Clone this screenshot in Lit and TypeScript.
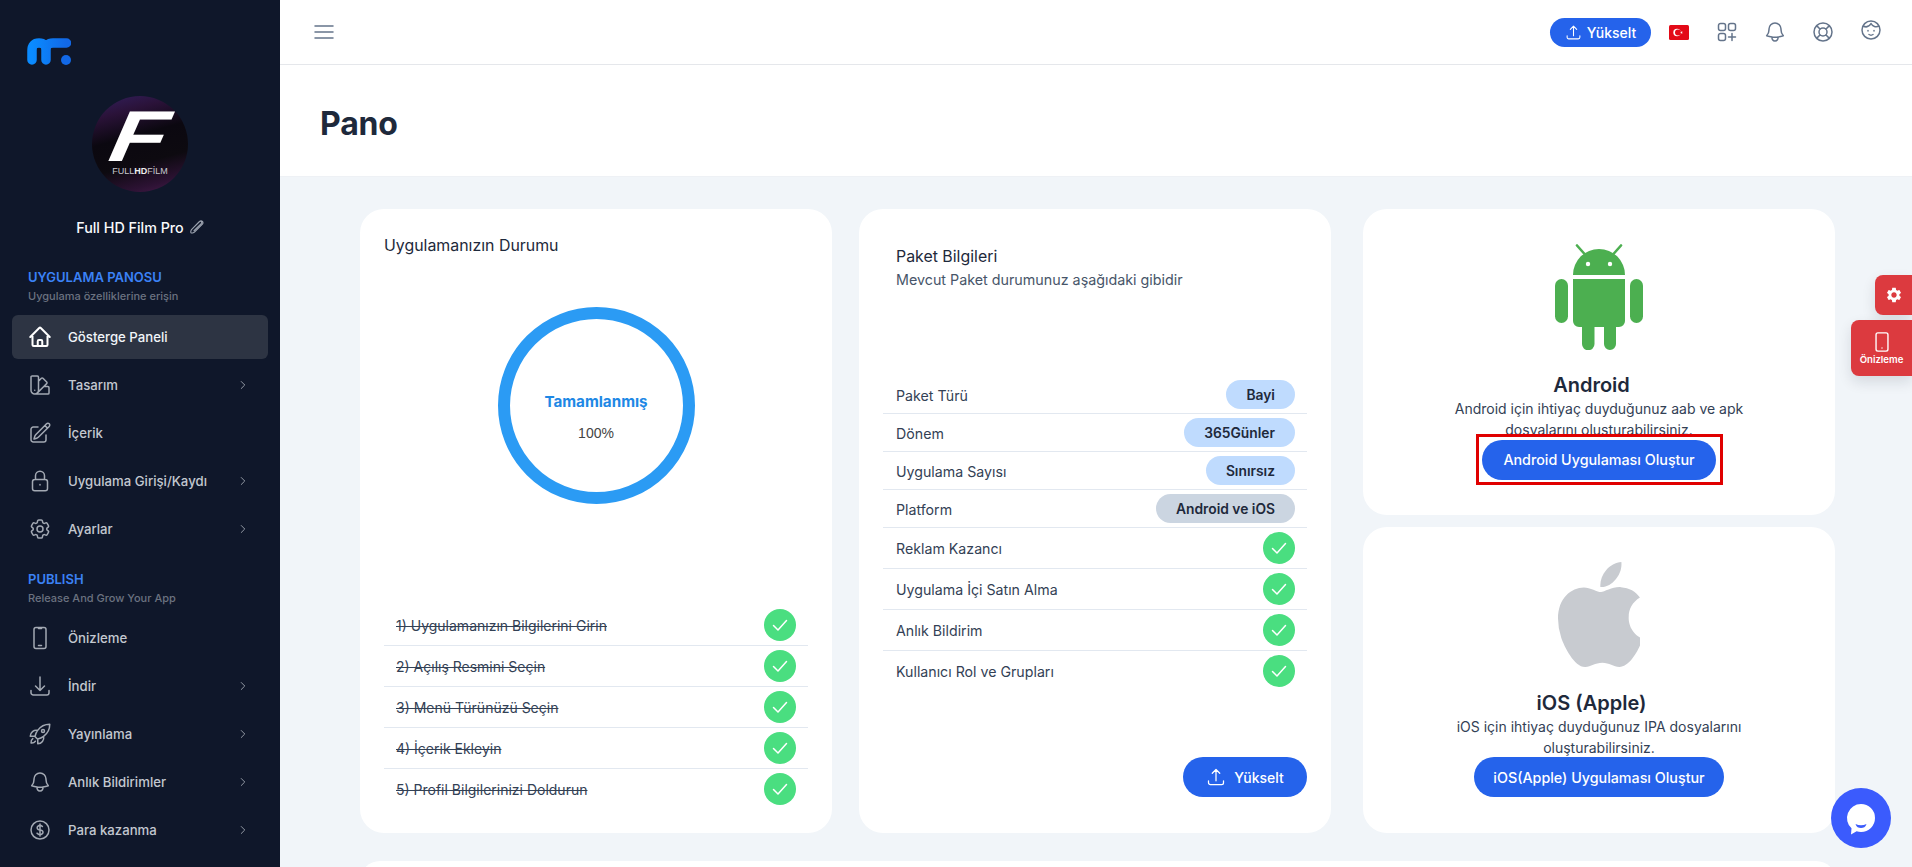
import { LitElement, html, css } from "lit";
import { customElement } from "lit/decorators.js";

const P = {
  home: "M2.25 12l8.954-8.955c.44-.439 1.152-.439 1.591 0L21.75 12M4.5 9.75v10.125c0 .621.504 1.125 1.125 1.125H9.75v-4.875c0-.621.504-1.125 1.125-1.125h2.25c.621 0 1.125.504 1.125 1.125V21h4.125c.621 0 1.125-.504 1.125-1.125V9.75M8.25 21h8.25",
  swatch: "M4.098 19.902a3.75 3.75 0 005.304 0l6.401-6.402M6.75 21A3.75 3.75 0 013 17.25V4.125C3 3.504 3.504 3 4.125 3h5.25c.621 0 1.125.504 1.125 1.125v4.072M6.75 21a3.75 3.75 0 003.75-3.75V8.197M6.75 21h13.125c.621 0 1.125-.504 1.125-1.125v-5.25c0-.621-.504-1.125-1.125-1.125h-4.072M10.5 8.197l2.88-2.88c.438-.439 1.15-.439 1.59 0l3.712 3.713c.44.44.44 1.152 0 1.59l-2.879 2.88M6.75 17.25h.008v.008H6.75v-.008z",
  edit: "M16.862 4.487l1.687-1.688a1.875 1.875 0 112.652 2.652L10.582 16.07a4.5 4.5 0 01-1.897 1.13L6 18l.8-2.685a4.5 4.5 0 011.13-1.897l8.932-8.931zm0 0L19.5 7.125M18 14v4.75A2.25 2.25 0 0115.75 21H5.25A2.25 2.25 0 013 18.75V8.25A2.25 2.25 0 015.25 6H10",
  lock: "M16.5 10.5V6.75a4.5 4.5 0 10-9 0v3.75m-.75 11.25h10.5a2.25 2.25 0 002.25-2.25v-6.75a2.25 2.25 0 00-2.25-2.25H6.75a2.25 2.25 0 00-2.25 2.25v6.75a2.25 2.25 0 002.25 2.25zM12 15.5v.5",
  gear: "M9.594 3.94c.09-.542.56-.94 1.11-.94h2.593c.55 0 1.02.398 1.11.94l.213 1.281c.063.374.313.686.645.87.074.04.147.083.22.127.324.196.72.257 1.075.124l1.217-.456a1.125 1.125 0 011.37.49l1.296 2.247a1.125 1.125 0 01-.26 1.431l-1.003.827c-.293.24-.438.613-.431.992a6.759 6.759 0 010 .255c-.007.378.138.75.43.99l1.005.828c.424.35.534.954.26 1.43l-1.298 2.247a1.125 1.125 0 01-1.369.491l-1.217-.456c-.355-.133-.75-.072-1.076.124a6.57 6.57 0 01-.22.128c-.331.183-.581.495-.644.869l-.213 1.28c-.09.543-.56.941-1.11.941h-2.594c-.55 0-1.02-.398-1.11-.94l-.213-1.281c-.062-.374-.312-.686-.644-.87a6.52 6.52 0 01-.22-.127c-.325-.196-.72-.257-1.076-.124l-1.217.456a1.125 1.125 0 01-1.369-.49l-1.297-2.247a1.125 1.125 0 01.26-1.431l1.004-.827c.292-.24.437-.613.43-.992a6.932 6.932 0 010-.255c.007-.378-.138-.75-.43-.99l-1.004-.828a1.125 1.125 0 01-.26-1.43l1.297-2.247a1.125 1.125 0 011.37-.491l1.216.456c.356.133.751.072 1.076-.124.072-.044.146-.087.22-.128.332-.183.582-.495.644-.869l.214-1.281zM15 12a3 3 0 11-6 0 3 3 0 016 0z",
  phone: "M8 1.500h8a2 2 0 012 2v17a2 2 0 01-2 2H8a2 2 0 01-2-2v-17a2 2 0 012-2zM10.500 1.500v1h3v-1M10.500 19.500h3",
  tablet: "M7.500 2h9a2 2 0 012 2v16a2 2 0 01-2 2h-9a2 2 0 01-2-2V4a2 2 0 012-2zM12 18.500v.1",
  download: "M3 16.5v2.25A2.25 2.25 0 005.25 21h13.5A2.25 2.25 0 0021 18.75V16.5M16.5 12L12 16.5m0 0L7.5 12m4.5 4.5V3",
  rocket: "M15.59 14.37a6 6 0 01-5.84 7.38v-4.8m5.84-2.58a14.98 14.98 0 006.16-12.12A14.98 14.98 0 009.631 8.41m5.96 5.96a14.926 14.926 0 01-5.841 2.58m-.119-8.54a6 6 0 00-7.381 5.84h4.8m2.581-5.84a14.927 14.927 0 00-2.58 5.84m2.699 2.7c-.103.021-.207.041-.311.06a15.09 15.09 0 01-2.448-2.448 14.9 14.9 0 01.06-.312m-2.24 2.39a4.493 4.493 0 00-1.757 4.306 4.493 4.493 0 004.306-1.758M16.5 9a1.5 1.5 0 11-3 0 1.5 1.5 0 013 0z",
  bell: "M14.857 17.082a23.848 23.848 0 005.454-1.31A8.967 8.967 0 0118 9.75v-.7V9A6 6 0 006 9v.75a8.967 8.967 0 01-2.312 6.022c1.733.64 3.56 1.085 5.455 1.31m5.714 0a24.255 24.255 0 01-5.714 0m5.714 0a3 3 0 11-5.714 0",
  dollar: "M12 6v12m-3-2.818l.879.659c1.171.879 3.07.879 4.242 0 1.172-.879 1.172-2.303 0-3.182C13.536 12.219 12.768 12 12 12c-.725 0-1.45-.22-2.003-.659-1.106-.879-1.106-2.303 0-3.182s2.9-.879 4.006 0l.415.33M21 12a9 9 0 11-18 0 9 9 0 0118 0z",
  chevron: "M9 6l6 6-6 6",
  upload: "M3 16.5v2.25A2.25 2.25 0 005.25 21h13.5A2.25 2.25 0 0021 18.75V16.5m-13.5-9L12 3m0 0l4.5 4.5M12 3v13.5",
  menu: "M3 6h18M3 12h18M3 18h18",
  apps: "M5.500 3.500h3a2 2 0 012 2v3a2 2 0 01-2 2h-3a2 2 0 01-2-2v-3a2 2 0 012-2zM15.500 3.500h3a2 2 0 012 2v3a2 2 0 01-2 2h-3a2 2 0 01-2-2v-3a2 2 0 012-2zM5.500 13.500h3a2 2 0 012 2v3a2 2 0 01-2 2h-3a2 2 0 01-2-2v-3a2 2 0 012-2zM17 13.500v7M13.500 17h7",
  buoy: "M21 12a9 9 0 11-18 0 9 9 0 0118 0zM16 12a4 4 0 11-8 0 4 4 0 018 0zM5.600 5.600l3.600 3.600M18.400 5.600l-3.600 3.600M5.600 18.400l3.600-3.600M18.400 18.400l-3.600-3.600",
  face: "M21 12a9 9 0 11-18 0 9 9 0 0118 0zM4 8c3 1.500 6 1 8-2.500 1.500 3 5 4 8 2.500M9 12.500v.5M15 12.500v.5M10 16.500c1.200.8 2.800.8 4 0",
  pencil: "M15.500 4.500a2.600 2.600 0 013.700 3.700L9 18.400c-1.600 1.600-4.300 2-5 1.300s-.3-3.400 1.300-5L15 5c1-1 2.300-.7 2.800-.2s.8 1.800-.2 2.800L8 17",
  check: "M5.500 12.500l4.500 4.500 8.500-9.500",
};

const ICO = (d: string, cls = "") => html`<svg class=${cls} viewBox="0 0 24 24" fill="none" stroke="currentColor" stroke-width="1.5" stroke-linecap="round" stroke-linejoin="round"><path d=${d}></path></svg>`;

const NAV1 = [
  { t: "Gösterge Paneli", i: P.home, active: true },
  { t: "Tasarım", i: P.swatch, more: true },
  { t: "İçerik", i: P.edit },
  { t: "Uygulama Girişi/Kaydı", i: P.lock, more: true },
  { t: "Ayarlar", i: P.gear, more: true },
];
const NAV2 = [
  { t: "Önizleme", i: P.phone },
  { t: "İndir", i: P.download, more: true },
  { t: "Yayınlama", i: P.rocket, more: true },
  { t: "Anlık Bildirimler", i: P.bell, more: true },
  { t: "Para kazanma", i: P.dollar, more: true },
];
const STEPS = [
  "1) Uygulamanızın Bilgilerini Girin",
  "2) Açılış Resmini Seçin",
  "3) Menü Türünüzü Seçin",
  "4) İçerik Ekleyin",
  "5) Profil Bilgilerinizi Doldurun",
];
const PILLS = [
  { l: "Paket Türü", v: "Bayi", gray: false },
  { l: "Dönem", v: "365Günler", gray: false },
  { l: "Uygulama Sayısı", v: "Sınırsız", gray: false },
  { l: "Platform", v: "Android ve iOS", gray: true },
];
const FEATS = ["Reklam Kazancı", "Uygulama İçi Satın Alma", "Anlık Bildirim", "Kullanıcı Rol ve Grupları"];

@customElement("app-root")
export class AppRoot extends LitElement {
  static styles = css`
    :host { display: block; width: 100%; height: 100vh; overflow: hidden; font-family: Inter, "Noto Sans", sans-serif; color: #1e293b; position: relative; }
    * { box-sizing: border-box; }
    svg { display: block; flex: none; }
    .app { display: flex; height: 867px; overflow: hidden; }

    .side { width: 280px; flex: none; background: #0f172a; color: #c3c8d0; padding-top: 38px; overflow: hidden; }
    .logo { display: block; margin-left: 27px; width: 44px; height: 27px; }
    .avatar { width: 96px; height: 96px; border-radius: 50%; margin: 31px auto 0; overflow: hidden; display: flex; flex-direction: column; align-items: center; color: #fff;
      background: linear-gradient(165deg, #33205f 0%, #2a1238 20%, #0b0810 42%, #0d0a10 66%, #2c1233 86%, #4a1d4e 100%); }
    .bigf { font-size: 72px; line-height: 56px; height: 56px; font-weight: 700; font-style: italic; margin-top: 12px; font-family: "Liberation Sans", sans-serif; transform: scaleX(1.3) skewX(-8deg); }
    .brand { font-size: 9px; line-height: 11px; color: #c9c9cf; margin-top: 2px; font-family: "Liberation Sans", sans-serif; }
    .brand b { color: #eee; }
    .name { display: flex; justify-content: center; align-items: center; gap: 4px; margin-top: 23px; height: 24px; font-size: 14.3px; font-weight: 500; color: #f8fafc; padding-left: 2px; }
    .name svg { width: 18px; height: 18px; color: #9ca3af; }
    .sec { margin: 30px 0 0 28px; font-size: 13px; line-height: 16px; font-weight: 600; color: #3b82f6; }
    .sec.two { margin-top: 20px; }
    .sub { margin: 3px 0 11px 28px; font-size: 11px; line-height: 16px; font-weight: 500; color: #6b7280; }
    .sub.two { margin-bottom: 10px; }
    .nav { display: flex; flex-direction: column; gap: 4px; padding: 0 12px; }
    .item { display: flex; align-items: center; gap: 16px; height: 44px; padding: 0 18px 0 16px; border-radius: 6px; font-size: 13.2px; font-weight: 500; }
    .item > svg:first-child { width: 24px; height: 24px; color: #a3a9b3; }
    .item.on { background: #2d3443; color: #f1f5f9; }
    .item.on > svg:first-child { color: #fff; stroke-width: 2; }
    .chev { width: 14px; height: 14px; margin-left: auto; color: #a3a9b3; }

    .main { flex: 1; min-width: 0; background: #f1f5f9; display: flex; flex-direction: column; }
    .top { height: 65px; flex: none; background: #fff; border-bottom: 1px solid #e5e7eb; display: flex; align-items: center; padding: 0 29px 0 32px; }
    .top .burger { width: 24px; height: 24px; color: #64748b; }
    .upbtn { display: flex; align-items: center; justify-content: center; background: #2563eb; color: #fff; border: 0; border-radius: 999px; font: inherit; font-weight: 500; font-size: 14px; }
    .top .upbtn { margin-left: auto; width: 101px; height: 29px; gap: 5px; }
    .top .upbtn svg { width: 17px; height: 17px; }
    .flag { margin-left: 18px; width: 20px; height: 15px; }
    .ti { width: 24px; height: 24px; color: #64748b; }
    .ti.a { margin-left: 26px; }
    .ti.b { margin-left: 24px; }
    .ti.c { margin-left: 24px; }
    .ti.d { margin: -4px 0 0 24px; }
    .band { height: 112px; flex: none; background: #fff; border-bottom: 1px solid #eef1f5; display: flex; align-items: center; padding: 0 0 0 40px; }
    .band h1 { margin: 7px 0 0; font-size: 32px; line-height: 36px; font-weight: 700; color: #1e293b; letter-spacing: -.2px; }

    .content { padding: 32px 0 0 80px; }
    .grid { display: grid; grid-template-columns: 472px 472px 477px; column-gap: 27px; height: 624px; }
    .card { background: #fff; border-radius: 24px; padding: 24px; display: flex; flex-direction: column; }
    .h { font-size: 15.9px; line-height: 24px; font-weight: 400; color: #1e293b; padding-top: 1px; }
    .ring { width: 197px; height: 197px; margin: 49px auto 0; border: 12px solid #2b9bf4; border-radius: 50%; display: flex; flex-direction: column; align-items: center; }
    .ring b { margin-top: 71px; height: 24px; line-height: 24px; font-size: 15.2px; font-weight: 700; color: #1e88e5; }
    .ring span { margin-top: 9px; font: 14px/20px "Liberation Sans", Arial, sans-serif; color: #444; }
    .list { margin-top: auto; }
    .row { display: flex; align-items: center; justify-content: space-between; padding: 4px 12px; border-bottom: 1px solid #e2e8f0; font-size: 14px; color: #334155; }
    .row:last-child { border-bottom: 0; }
    .row s { text-decoration: line-through; padding-top: 1px; }
    .ok { width: 32px; height: 32px; border-radius: 50%; background: #4ade80; color: #fff; display: flex; align-items: center; justify-content: center; }
    .ok svg { width: 24px; height: 24px; }
    .card.pk { padding-bottom: 36px; }
    .pk .h { margin: 12px 0 0 13px; padding-top: 0; }
    .pk .d { margin: 1px 0 0 13px; font-size: 14.3px; line-height: 20px; color: #475569; }
    .rows { margin-top: 86px; }
    .rows .row { padding-left: 13px; font-size: 14.2px; }
    .rows .row > span:first-child { padding-top: 1px; }
    .pill { height: 29px; padding: 0 20px; border-radius: 999px; background: #bfdbfe; color: #1e293b; display: flex; align-items: center; font-weight: 600; font-size: 13.8px; }
    .pill.gray { background: #cbd5e1; }
    .card .upbtn { margin-top: auto; align-self: flex-end; width: 124px; height: 40px; gap: 8px; }
    .card .upbtn svg { width: 20px; height: 20px; }

    .stack { margin-left: 5px; display: grid; grid-template-rows: 1fr 1fr; row-gap: 12px; min-height: 0; }
    .plat { background: #fff; border-radius: 24px; padding-top: 35px; display: flex; flex-direction: column; align-items: center; text-align: center; }
    .plat h2 { margin: 21px 15px 0 0; font-size: 20px; line-height: 28px; font-weight: 600; color: #1e293b; }
    .plat.ios h2 { margin-top: 22px; }
    .plat p { margin: -1px 0 0; font-size: 14px; line-height: 21px; color: #334155; }
    .cta { background: #2563eb; color: #fff; border: 0; border-radius: 999px; height: 40px; font: inherit; font-size: 14.3px; font-weight: 500; white-space: nowrap; padding: 0; }
    .mark { margin-top: -6px; border: 3px solid #e00000; background: #fff; width: 247px; height: 51px; padding: 2.5px 3.5px; display: flex; position: relative; }
    .mark .cta { width: 234px; }
    .ios .cta { width: 250px; margin-top: -1px; }
    .next { margin-top: 28px; height: 40px; background: #fff; border-radius: 24px; width: 1476px; }

    .tab { position: absolute; right: 0; background: #dc3a3f; color: #fff; border-radius: 8px 0 0 8px; display: flex; flex-direction: column; align-items: center; justify-content: center; box-shadow: 0 6px 14px rgba(15,23,42,.12); }
    .tab.s { top: 275px; width: 37px; height: 40px; }
    .tab.p { top: 320px; width: 61px; height: 56px; font-size: 9.6px; font-weight: 600; gap: 1px; }
    .tab.p svg { width: 22px; height: 22px; }
    .chat { position: absolute; left: 1831px; top: 788px; width: 60px; height: 60px; border-radius: 50%; background: #3b5bfd; }
    .chat svg { width: 60px; height: 60px; }
  `;

  private nav(list: typeof NAV1) {
    return html`<div class="nav">${list.map((n: any) => html`
      <div class="item ${n.active ? "on" : ""}">${ICO(n.i)}<span>${n.t}</span>${n.more ? ICO(P.chevron, "chev") : ""}</div>`)}</div>`;
  }
  private okIcon() {
    return html`<span class="ok">${ICO(P.check)}</span>`;
  }

  render() {
    return html`
    <div class="app">
      <aside class="side">
        <svg class="logo" viewBox="27 38 44 27">
          <defs><linearGradient id="lg" x1="0" y1="0" x2="1" y2="0"><stop offset="0" stop-color="#0a8bff"/><stop offset="1" stop-color="#1268e6"/></linearGradient></defs>
          <path d="M32 60V50.500Q32 43 39 43Q46 43 46 50.500V60M46 50.500Q46 43 53 43H66.500" fill="none" stroke="url(#lg)" stroke-width="9.500" stroke-linecap="round"/>
          <circle cx="66" cy="60" r="5" fill="#1268e6"/>
        </svg>
        <div class="avatar"><span class="bigf">F</span><span class="brand">FULL<b>HD</b>FİLM</span></div>
        <div class="name"><span>Full HD Film Pro</span>${ICO(P.pencil)}</div>
        <div class="sec">UYGULAMA PANOSU</div>
        <div class="sub">Uygulama özelliklerine erişin</div>
        ${this.nav(NAV1)}
        <div class="sec two">PUBLISH</div>
        <div class="sub two">Release And Grow Your App</div>
        ${this.nav(NAV2)}
      </aside>
      <main class="main">
        <header class="top">
          ${ICO(P.menu, "burger")}
          <button class="upbtn">${ICO(P.upload)}<span>Yükselt</span></button>
          <svg class="flag" viewBox="0 0 20 15"><rect width="20" height="15" rx="1.500" fill="#e30a17"/><circle cx="8" cy="7.500" r="3.700" fill="#fff"/><circle cx="9" cy="7.500" r="3" fill="#e30a17"/><path d="M11 7.500l2.800-1-1.700 2.400V6.100l1.700 2.400z" fill="#fff"/></svg>
          ${ICO(P.apps, "ti a")}${ICO(P.bell, "ti b")}${ICO(P.buoy, "ti c")}${ICO(P.face, "ti d")}
        </header>
        <div class="band"><h1>Pano</h1></div>
        <div class="content">
          <div class="grid">
            <section class="card">
              <div class="h">Uygulamanızın Durumu</div>
              <div class="ring"><b>Tamamlanmış</b><span>100%</span></div>
              <div class="list">${STEPS.map((s) => html`<div class="row"><s>${s}</s>${this.okIcon()}</div>`)}</div>
            </section>
            <section class="card pk">
              <div class="h">Paket Bilgileri</div>
              <div class="d">Mevcut Paket durumunuz aşağıdaki gibidir</div>
              <div class="rows">
                ${PILLS.map((p) => html`<div class="row"><span>${p.l}</span><span class="pill ${p.gray ? "gray" : ""}">${p.v}</span></div>`)}
                ${FEATS.map((f) => html`<div class="row"><span>${f}</span>${this.okIcon()}</div>`)}
              </div>
              <button class="upbtn">${ICO(P.upload)}<span>Yükselt</span></button>
            </section>
            <div class="stack">
              <section class="plat">
                <svg width="88" height="106" viewBox="0 0 88 106" fill="#4caf50">
                  <path d="M18 31a26 26 0 0152 0z"/>
                  <path d="M22 1.500l8 9M66 1.500l-8 9" stroke="#4caf50" stroke-width="2.600" stroke-linecap="round"/>
                  <circle cx="33" cy="20" r="2.200" fill="#fff"/><circle cx="55" cy="20" r="2.200" fill="#fff"/>
                  <path d="M18 35h52v42a6 6 0 01-6 6h-3v17a6 6 0 01-12 0V83H39.500v17a6 6 0 01-12.500 0V83h-3a6 6 0 01-6-6z"/>
                  <rect x="0" y="35" width="13" height="44" rx="6.500"/><rect x="75" y="35" width="13" height="44" rx="6.500"/>
                </svg>
                <h2>Android</h2>
                <p>Android için ihtiyaç duyduğunuz aab ve apk<br />dosyalarını oluşturabilirsiniz.</p>
                <div class="mark"><button class="cta">Android Uygulaması Oluştur</button></div>
              </section>
              <section class="plat ios">
                <svg width="82" height="105" viewBox="4 32 365 448" preserveAspectRatio="none" fill="#c8cbd0"><path d="M318.7 268.7c-.2-36.7 16.4-64.4 50-84.8-18.8-26.9-47.2-41.7-84.7-44.6-35.5-2.8-74.3 20.7-88.5 20.7-15 0-49.4-19.7-76.4-19.7C63.3 141.2 4 184.8 4 273.5q0 39.3 14.4 81.2c12.8 36.7 59 126.7 107.2 125.2 25.2-.6 43-17.9 75.8-17.9 31.8 0 48.3 17.9 76.4 17.9 48.6-.7 90.4-82.5 102.6-119.3-65.2-30.7-61.7-90-61.7-91.9zm-56.6-164.2c27.3-32.4 24.8-61.9 24-72.5-24.1 1.4-52 16.4-67.9 34.9-17.5 19.8-27.800 44.3-25.6 71.9 26.1 2 49.9-11.4 69.5-34.3z"/></svg>
                <h2>iOS (Apple)</h2>
                <p>iOS için ihtiyaç duyduğunuz IPA dosyalarını<br />oluşturabilirsiniz.</p>
                <button class="cta">iOS(Apple) Uygulaması Oluştur</button>
              </section>
            </div>
          </div>
          <div class="next"></div>
        </div>
      </main>
    </div>
    <div class="tab s"><svg width="18" height="18" viewBox="0 0 24 24" fill="#fff"><path fill-rule="evenodd" d="M19.140 12.940c.04-.3.06-.61.06-.94 0-.32-.02-.64-.07-.94l2.030-1.580c.18-.14.23-.41.12-.61l-1.920-3.320c-.12-.22-.37-.29-.59-.22l-2.390.96c-.5-.38-1.030-.7-1.620-.94l-.36-2.540c-.04-.24-.24-.41-.48-.41h-3.840c-.24 0-.43.17-.47.41l-.36 2.540c-.59.24-1.130.57-1.620.94l-2.390-.96c-.22-.08-.47 0-.59.22L2.740 8.870c-.12.21-.08.47.12.61l2.030 1.580c-.05.3-.09.63-.09.94s.02.64.07.94l-2.030 1.580c-.18.14-.23.41-.12.61l1.920 3.320c.12.22.37.29.59.22l2.390-.96c.5.38 1.030.7 1.620.94l.36 2.540c.05.24.24.41.48.41h3.840c.24 0 .44-.17.47-.41l.36-2.540c.59-.24 1.130-.56 1.620-.94l2.390.96c.22.08.47 0 .59-.22l1.920-3.320c.12-.22.07-.47-.12-.61l-2.010-1.580zM12 15.600c-1.980 0-3.600-1.620-3.600-3.600s1.620-3.600 3.600-3.600 3.600 1.620 3.600 3.600-1.620 3.600-3.600 3.600z"/></svg></div>
    <div class="tab p">${ICO(P.tablet)}<span>Önizleme</span></div>
    <div class="chat"><svg viewBox="0 0 60 60"><path d="M30 16a14 14 0 110 28c-1.500 0-3 -.2-4.400-.7L20 46.500l.5-6.200A14 14 0 0130 16z" fill="#fff"/><path d="M24.500 36c3.500 1.600 7.500 1.600 11 0-1 3-3 4-5.500 4s-4.500-1-5.500-4z" fill="#3b5bfd"/></svg></div>`;
  }
}
